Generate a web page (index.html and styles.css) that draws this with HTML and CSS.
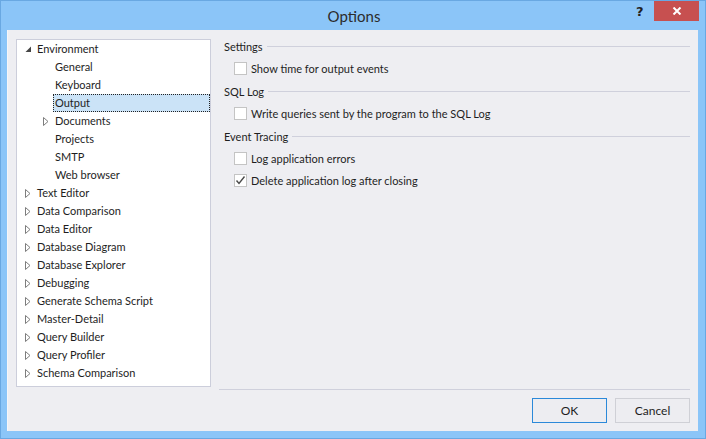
FILE: index.html
```html
<!DOCTYPE html>
<html>
<head>
<meta charset="utf-8">
<title>Options</title>
<link rel="stylesheet" href="styles.css">
</head>
<body>
<div class="window">
  <div class="titlebar">
    <div class="title">Options</div>
    <div class="help">?</div>
    <div class="close">
      <svg width="10" height="8" viewBox="0 0 10 8"><path d="M1.5 0.5 L8.5 7.5 M8.5 0.5 L1.5 7.5" stroke="#fff" stroke-width="2"/></svg>
    </div>
  </div>
  <div class="client">
    <div class="main">
      <div class="tree">
        <div class="row lvl0"><span class="exp"><svg width="7" height="7" viewBox="0 0 7 7"><path d="M6 0.5 L6 6 L0.5 6 Z" fill="#454545"/></svg></span><span class="label">Environment</span></div>
        <div class="row lvl1"><span class="exp"></span><span class="label">General</span></div>
        <div class="row lvl1"><span class="exp"></span><span class="label">Keyboard</span></div>
        <div class="row lvl1 sel"><span class="exp"></span><span class="label">Output</span></div>
        <div class="row lvl1"><span class="exp"><svg class="tri" width="6" height="9" viewBox="0 0 6 9"><path d="M0.5 0.5 L5 4.5 L0.5 8.5 Z" fill="#fff" stroke="#7d7d7d"/></svg></span><span class="label">Documents</span></div>
        <div class="row lvl1"><span class="exp"></span><span class="label">Projects</span></div>
        <div class="row lvl1"><span class="exp"></span><span class="label">SMTP</span></div>
        <div class="row lvl1"><span class="exp"></span><span class="label">Web browser</span></div>
        <div class="row lvl0"><span class="exp"><svg class="tri" width="6" height="9" viewBox="0 0 6 9"><path d="M0.5 0.5 L5 4.5 L0.5 8.5 Z" fill="#fff" stroke="#7d7d7d"/></svg></span><span class="label">Text Editor</span></div>
        <div class="row lvl0"><span class="exp"><svg class="tri" width="6" height="9" viewBox="0 0 6 9"><path d="M0.5 0.5 L5 4.5 L0.5 8.5 Z" fill="#fff" stroke="#7d7d7d"/></svg></span><span class="label">Data Comparison</span></div>
        <div class="row lvl0"><span class="exp"><svg class="tri" width="6" height="9" viewBox="0 0 6 9"><path d="M0.5 0.5 L5 4.5 L0.5 8.5 Z" fill="#fff" stroke="#7d7d7d"/></svg></span><span class="label">Data Editor</span></div>
        <div class="row lvl0"><span class="exp"><svg class="tri" width="6" height="9" viewBox="0 0 6 9"><path d="M0.5 0.5 L5 4.5 L0.5 8.5 Z" fill="#fff" stroke="#7d7d7d"/></svg></span><span class="label">Database Diagram</span></div>
        <div class="row lvl0"><span class="exp"><svg class="tri" width="6" height="9" viewBox="0 0 6 9"><path d="M0.5 0.5 L5 4.5 L0.5 8.5 Z" fill="#fff" stroke="#7d7d7d"/></svg></span><span class="label">Database Explorer</span></div>
        <div class="row lvl0"><span class="exp"><svg class="tri" width="6" height="9" viewBox="0 0 6 9"><path d="M0.5 0.5 L5 4.5 L0.5 8.5 Z" fill="#fff" stroke="#7d7d7d"/></svg></span><span class="label">Debugging</span></div>
        <div class="row lvl0"><span class="exp"><svg class="tri" width="6" height="9" viewBox="0 0 6 9"><path d="M0.5 0.5 L5 4.5 L0.5 8.5 Z" fill="#fff" stroke="#7d7d7d"/></svg></span><span class="label">Generate Schema Script</span></div>
        <div class="row lvl0"><span class="exp"><svg class="tri" width="6" height="9" viewBox="0 0 6 9"><path d="M0.5 0.5 L5 4.5 L0.5 8.5 Z" fill="#fff" stroke="#7d7d7d"/></svg></span><span class="label">Master-Detail</span></div>
        <div class="row lvl0"><span class="exp"><svg class="tri" width="6" height="9" viewBox="0 0 6 9"><path d="M0.5 0.5 L5 4.5 L0.5 8.5 Z" fill="#fff" stroke="#7d7d7d"/></svg></span><span class="label">Query Builder</span></div>
        <div class="row lvl0"><span class="exp"><svg class="tri" width="6" height="9" viewBox="0 0 6 9"><path d="M0.5 0.5 L5 4.5 L0.5 8.5 Z" fill="#fff" stroke="#7d7d7d"/></svg></span><span class="label">Query Profiler</span></div>
        <div class="row lvl0"><span class="exp"><svg class="tri" width="6" height="9" viewBox="0 0 6 9"><path d="M0.5 0.5 L5 4.5 L0.5 8.5 Z" fill="#fff" stroke="#7d7d7d"/></svg></span><span class="label">Schema Comparison</span></div>
      </div>
      <div class="panel">
        <div class="group-head"><span>Settings</span><span class="rule"></span></div>
        <div class="check"><span class="box"></span><span>Show time for output events</span></div>
        <div class="group-head"><span>SQL Log</span><span class="rule"></span></div>
        <div class="check"><span class="box"></span><span>Write queries sent by the program to the SQL Log</span></div>
        <div class="group-head"><span>Event Tracing</span><span class="rule"></span></div>
        <div class="check"><span class="box"></span><span>Log application errors</span></div>
        <div class="check"><span class="box checked"><svg width="11" height="11" viewBox="0 0 11 11"><path d="M1.5 5.5 L4 8.5 L9.5 1.5" fill="none" stroke="#4a4a4a" stroke-width="1.4"/></svg></span><span>Delete application log after closing</span></div>
      </div>
    </div>
    <div class="footer">
      <button class="btn default">OK</button>
      <button class="btn">Cancel</button>
    </div>
  </div>
</div>
</body>
</html>
```
FILE: styles.css
```css
* { box-sizing: border-box; }
html, body { margin: 0; padding: 0; }
body {
  width: 706px;
  height: 439px;
  overflow: hidden;
  font-family: "Lato", "Liberation Sans", sans-serif;
  font-size: 11px;
  color: #1e1e1e;
  background: #8bc5f8;
}
.window {
  width: 706px;
  height: 439px;
  border: 1px solid #69a8e2;
  background: #8bc5f8;
  display: flex;
  flex-direction: column;
  padding: 0 7px 7px 6px;
}
.titlebar {
  height: 29px;
  position: relative;
  flex: none;
}
.title {
  text-align: center;
  font-size: 15px;
  line-height: 30px;
  color: #2c2c2c;
  padding-left: 3px;
}
.help {
  position: absolute;
  left: 629px;
  top: 3px;
  font-family: "DejaVu Sans", sans-serif;
  font-weight: bold;
  font-size: 13px;
  color: #222;
}
.close {
  position: absolute;
  left: 647px;
  top: 0;
  width: 45px;
  height: 20px;
  background: #c75050;
  display: flex;
  align-items: center;
  justify-content: center;
}
.client {
  flex: 1;
  background: #eeeef2;
  border-left: 1px solid #f6f6f9;
  padding: 5px 8px 0 8px;
  display: flex;
  flex-direction: column;
}
.main {
  display: flex;
  gap: 8px;
  height: 352px;
}
.tree {
  width: 195px;
  height: 348px;
  margin-top: 4px;
  background: #fff;
  border: 1px solid #cccedb;
}
.row {
  height: 18px;
  display: flex;
  align-items: center;
  white-space: nowrap;
}
.lvl0 { padding-left: 7px; }
.lvl1 { padding-left: 25px; }
.exp {
  width: 11px;
  height: 18px;
  display: flex;
  align-items: center;
  padding-left: 1px;
  flex: none;
}
.lvl1 .exp { width: 11px; }
.label {
  height: 18px;
  line-height: 18px;
  padding-left: 2px;
  flex: 1;
}
.sel .label {
  background: #cbe3f7;
  outline: 1px dotted #222;
  outline-offset: -1px;
}
.panel {
  flex: 1;
  display: flex;
  flex-direction: column;
}
.group-head {
  height: 22px;
  display: flex;
  align-items: center;
  padding-left: 5px;
  gap: 4px;
}
.check + .group-head { margin-top: 1px; }
.rule {
  flex: 1;
  height: 1px;
  background: #cfd0dc;
  margin-top: 1px;
}
.check {
  height: 22px;
  display: flex;
  align-items: center;
  padding-left: 15px;
  gap: 4px;
}
.box {
  width: 13px;
  height: 13px;
  border: 1px solid #c4c4c4;
  background: #fff;
  flex: none;
  display: flex;
  align-items: center;
  justify-content: center;
}
.footer {
  margin-left: 203px;
  margin-top: 2px;
  border-top: 1px solid #cfd0dc;
  padding-top: 8px;
  display: flex;
  justify-content: flex-end;
  gap: 8px;
}
.btn {
  width: 75px;
  height: 25px;
  border: 1px solid #cfd0d6;
  background: #ededf1;
  font-family: inherit;
  font-size: 12px;
  color: #1e1e1e;
  padding: 0;
}
.btn.default { border-color: #2b89d9; }
```
